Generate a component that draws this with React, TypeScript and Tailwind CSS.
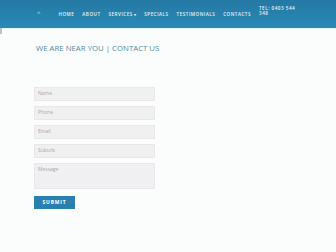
import React from "react";

export default function App() {
  const nav = ["HOME", "ABOUT", "SERVICES", "SPECIALS", "TESTIMONIALS", "CONTACTS"];
  return (
    <div
      className="w-[336px] h-[252px] bg-[#fbfdfd] overflow-hidden relative"
      style={{ fontFamily: '"Open Sans", "Liberation Sans", sans-serif' }}
    >
      <div className="h-[28px] bg-gradient-to-b from-[#2478a4] to-[#2b8ab6] flex items-center">
        <div className="w-[37px]" />
        <span className="text-[6px] text-[#cfe6f2] leading-none mt-[-2px]">^</span>
        <div className="w-[18px]" />
        <div className="flex items-center gap-[8px] text-[4.6px] tracking-[0.5px] text-[#e6f3fa] font-semibold leading-none mt-[1px]">
          {nav.map((n) => (
            <span key={n}>
              {n}
              {n === "SERVICES" && <span className="ml-[1px] text-[4px]">▾</span>}
            </span>
          ))}
          <span className="flex flex-col leading-[5px] mt-[-8px]">
            <span>TEL: 0403 544</span>
            <span>348</span>
          </span>
        </div>
      </div>
      <div className="h-[1px] bg-[#e3f3f6]" />
      <div className="absolute left-0 top-[28px] w-[2px] h-[6px] bg-[#b8c4c8]" />
      <div className="pl-[36px] pt-[16px]">
        <div className="text-[7.8px] text-[#55899a] leading-none">
          WE ARE NEAR YOU | CONTACT US
        </div>
      </div>
      <div className="pl-[34px] pt-[34px] flex flex-col gap-[5px] w-[155px]">
        {["Name", "Phone", "Email", "Suburb"].map((p) => (
          <div
            key={p}
            className="h-[14px] bg-[#f0f0f1] border border-[#e8e8ea] flex items-center pl-[3px] text-[5px] text-[#a8a8ac]"
          >
            {p}
          </div>
        ))}
        <div className="h-[26px] bg-[#f0eff1] border border-[#e8e8ea] pl-[3px] pt-[3px] text-[5px] text-[#a8a8ac] leading-none">
          Message
        </div>
        <div className="mt-[2px] w-[41px] h-[13px] bg-[#2a7fae] text-white text-[5px] font-bold tracking-[0.8px] flex items-center justify-center">
          SUBMIT
        </div>
      </div>
    </div>
  );
}
